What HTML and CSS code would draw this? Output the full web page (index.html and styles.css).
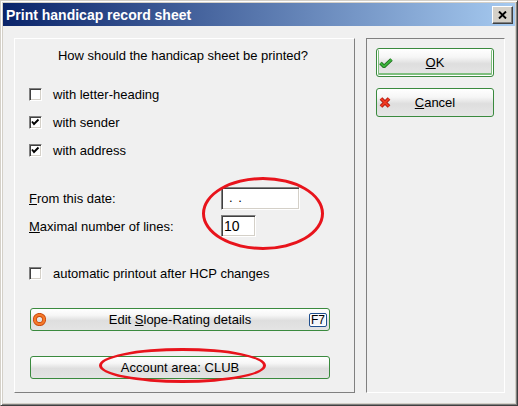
FILE: index.html
```html
<!DOCTYPE html>
<html lang="en">
<head>
    <meta charset="UTF-8">
    <title>Print handicap record sheet</title>
    <link rel="stylesheet" href="styles.css">
</head>
<body>
    <div class="window">
        <div class="titlebar">
            <span class="title">Print handicap record sheet</span>
            <span class="close-btn">
                <svg width="9" height="8" viewBox="0 0 9 8"><path d="M1,0.5 L8,7.5 M8,0.5 L1,7.5" stroke="#000" stroke-width="1.9" fill="none"/></svg>
            </span>
        </div>

        <div class="client">
            <div class="group main">
                <p class="question">How should the handicap sheet be printed?</p>

                <div class="options">
                    <div class="check-row"><span class="checkbox"></span>with letter-heading</div>
                    <div class="check-row"><span class="checkbox checked"><svg width="11" height="11" viewBox="0 0 11 11"><path d="M2,4.5 L4,7 L8.5,2.5" stroke="#000" stroke-width="1.9" fill="none"/></svg></span>with sender</div>
                    <div class="check-row"><span class="checkbox checked"><svg width="11" height="11" viewBox="0 0 11 11"><path d="M2,4.5 L4,7 L8.5,2.5" stroke="#000" stroke-width="1.9" fill="none"/></svg></span>with address</div>
                </div>

                <div class="fields">
                    <div class="field-row date-row">
                        <span class="field-label"><u>F</u>rom this date:</span>
                        <span class="input date">. .</span>
                    </div>
                    <div class="field-row lines-row">
                        <span class="field-label"><u>M</u>aximal number of lines:</span>
                        <span class="input lines">10</span>
                    </div>
                </div>

                <div class="check-row auto"><span class="checkbox"></span>automatic printout after HCP changes</div>

                <div class="action-btn slope">
                    <svg class="ring" width="13" height="13" viewBox="0 0 13 13">
                        <circle cx="6.5" cy="6.5" r="4.6" stroke="#c84a10" stroke-width="4" fill="none"/>
                        <circle cx="6.5" cy="6.5" r="4.6" stroke="#f57a2a" stroke-width="2.4" fill="none"/>
                    </svg>
                    <span class="btn-label">Edit <u>S</u>lope-Rating details</span>
                    <span class="key">F7</span>
                </div>

                <div class="action-btn account">
                    <span class="btn-label">Account area: CLUB</span>
                </div>

                <div class="mark mark-fields"></div>
                <div class="mark mark-account"></div>
            </div>

            <div class="group side">
                <div class="dlg-btn default">
                    <svg width="14" height="10" viewBox="0 0 14 10">
                        <path d="M1.5,5 L5,8.5 L12.5,1.5" stroke="#1d6b1d" stroke-width="3.6" fill="none"/>
                        <path d="M1.5,5 L5,8.5 L12.5,1.5" stroke="#3cb43c" stroke-width="1.8" fill="none"/>
                    </svg>
                    <span class="btn-label"><u>O</u>K</span>
                </div>
                <div class="dlg-btn">
                    <svg width="12" height="11" viewBox="0 0 12 11">
                        <path d="M2,1.5 L10,9.5 M10,1.5 L2,9.5" stroke="#a8140c" stroke-width="3.8" fill="none"/>
                        <path d="M2,1.5 L10,9.5 M10,1.5 L2,9.5" stroke="#f03a22" stroke-width="2" fill="none"/>
                    </svg>
                    <span class="btn-label"><u>C</u>ancel</span>
                </div>
            </div>
        </div>
    </div>
</body>
</html>
```

FILE: styles.css
```css
* {
    box-sizing: border-box;
}
body {
    margin: 0;
    font-family: "Liberation Sans", Arial, sans-serif;
    font-size: 13px;
    color: #000;
}
.window {
    width: 518px;
    height: 406px;
    background: #d4d0c8;
    border: 1px solid;
    border-color: #d4d0c8 #404040 #404040 #d4d0c8;
    box-shadow: inset 1px 1px #fff, inset -1px -1px #808080;
    padding: 2px;
    display: flex;
    flex-direction: column;
}
.titlebar {
    height: 23px;
    flex: none;
    display: flex;
    align-items: center;
    justify-content: space-between;
    padding: 0 2px 0 3px;
    background: linear-gradient(to right, #0a246a, #a6caf0);
}
.title {
    color: #fff;
    font-weight: bold;
    font-size: 14px;
}
.close-btn {
    width: 21px;
    height: 18px;
    display: flex;
    align-items: center;
    justify-content: center;
    background: #d4d0c8;
    border: 1px solid;
    border-color: #fff #404040 #404040 #fff;
    box-shadow: inset -1px -1px #808080;
}
.close-btn svg {
    display: block;
}
.client {
    flex: 1;
    display: flex;
    gap: 11px;
    padding: 12px 0 0 11px;
    background: #f0f0f0;
}
.group {
    height: 355px;
    border: 1px solid;
    position: relative;
}
.main {
    width: 341px;
    border-color: #fff #808080 #808080 #fff;
    padding: 9px 0 0 14px;
}
.side {
    width: 139px;
    border-color: #808080 #fff #fff #808080;
    padding: 9px 0 0 9px;
}
.question {
    margin: 0;
    line-height: 16px;
    text-align: center;
    padding-right: 17px;
}
.options {
    margin-top: 22px;
    display: flex;
    flex-direction: column;
    gap: 12px;
}
.check-row {
    height: 16px;
    display: flex;
    align-items: center;
}
.checkbox {
    width: 13px;
    height: 13px;
    margin-right: 11px;
    background: #fff;
    border: 1px solid;
    border-color: #808080 #fff #fff #808080;
    box-shadow: inset 1px 1px #404040, inset -1px -1px #d4d0c8;
    flex: none;
}
.checkbox svg {
    display: block;
}
.fields {
    margin-top: 29px;
    display: flex;
    flex-direction: column;
    gap: 5px;
}
.field-row {
    display: flex;
    align-items: center;
}
.field-label {
    width: 192px;
}
.input {
    background: #fff;
    border: 1px solid;
    border-color: #808080 #fff #fff #808080;
    box-shadow: inset 1px 1px #404040, inset -1px -1px #d4d0c8;
    padding-left: 2px;
    white-space: pre;
    line-height: 20px;
}
.date {
    width: 79px;
    height: 23px;
    padding-left: 7px;
    word-spacing: 2px;
}
.lines {
    width: 35px;
    height: 22px;
    font-size: 14px;
}
.auto {
    margin-top: 28px;
}
.action-btn {
    width: 300px;
    height: 23px;
    margin-left: 1px;
    display: grid;
    grid-template-columns: 1fr auto 1fr;
    align-items: center;
    padding: 0 2px;
    border: 1px solid #3a8a3e;
    border-radius: 3px;
    background: linear-gradient(to bottom, #ffffff 0%, #f6f6f6 30%, #dedede 55%, #e4e4e4 100%);
}
.slope {
    margin-top: 27px;
}
.account {
    margin-top: 25px;
}
.action-btn .btn-label {
    grid-column: 2;
}
.ring {
    justify-self: start;
    display: block;
}
.key {
    grid-column: 3;
    justify-self: end;
    width: 18px;
    height: 14px;
    font-size: 12px;
    line-height: 12px;
    text-align: center;
    border: 1px solid #1f4f8f;
    border-radius: 2px;
    background: #f4f6fa;
    box-shadow: inset 0 0 0 1px #fff;
}
.mark {
    position: absolute;
    border: 3px solid #e8141c;
    border-radius: 50%;
}
.mark-fields {
    left: 187px;
    top: 138px;
    width: 122px;
    height: 73px;
}
.mark-account {
    left: 84px;
    top: 309px;
    width: 167px;
    height: 35px;
}
.dlg-btn {
    width: 118px;
    height: 29px;
    display: grid;
    grid-template-columns: 16px 1fr 16px;
    align-items: center;
    padding: 0 2px;
    border: 1px solid #3a8a3e;
    border-radius: 3px;
    background: linear-gradient(to bottom, #ffffff 0%, #f6f6f6 30%, #dedede 55%, #e6e6e6 100%);
}
.dlg-btn + .dlg-btn {
    margin-top: 11px;
}
.dlg-btn.default {
    box-shadow: inset 0 0 0 1px #fff, inset 0 -1px 0 2px #7fbf7f;
}
.dlg-btn svg {
    display: block;
}
.dlg-btn .btn-label {
    text-align: center;
}
```
